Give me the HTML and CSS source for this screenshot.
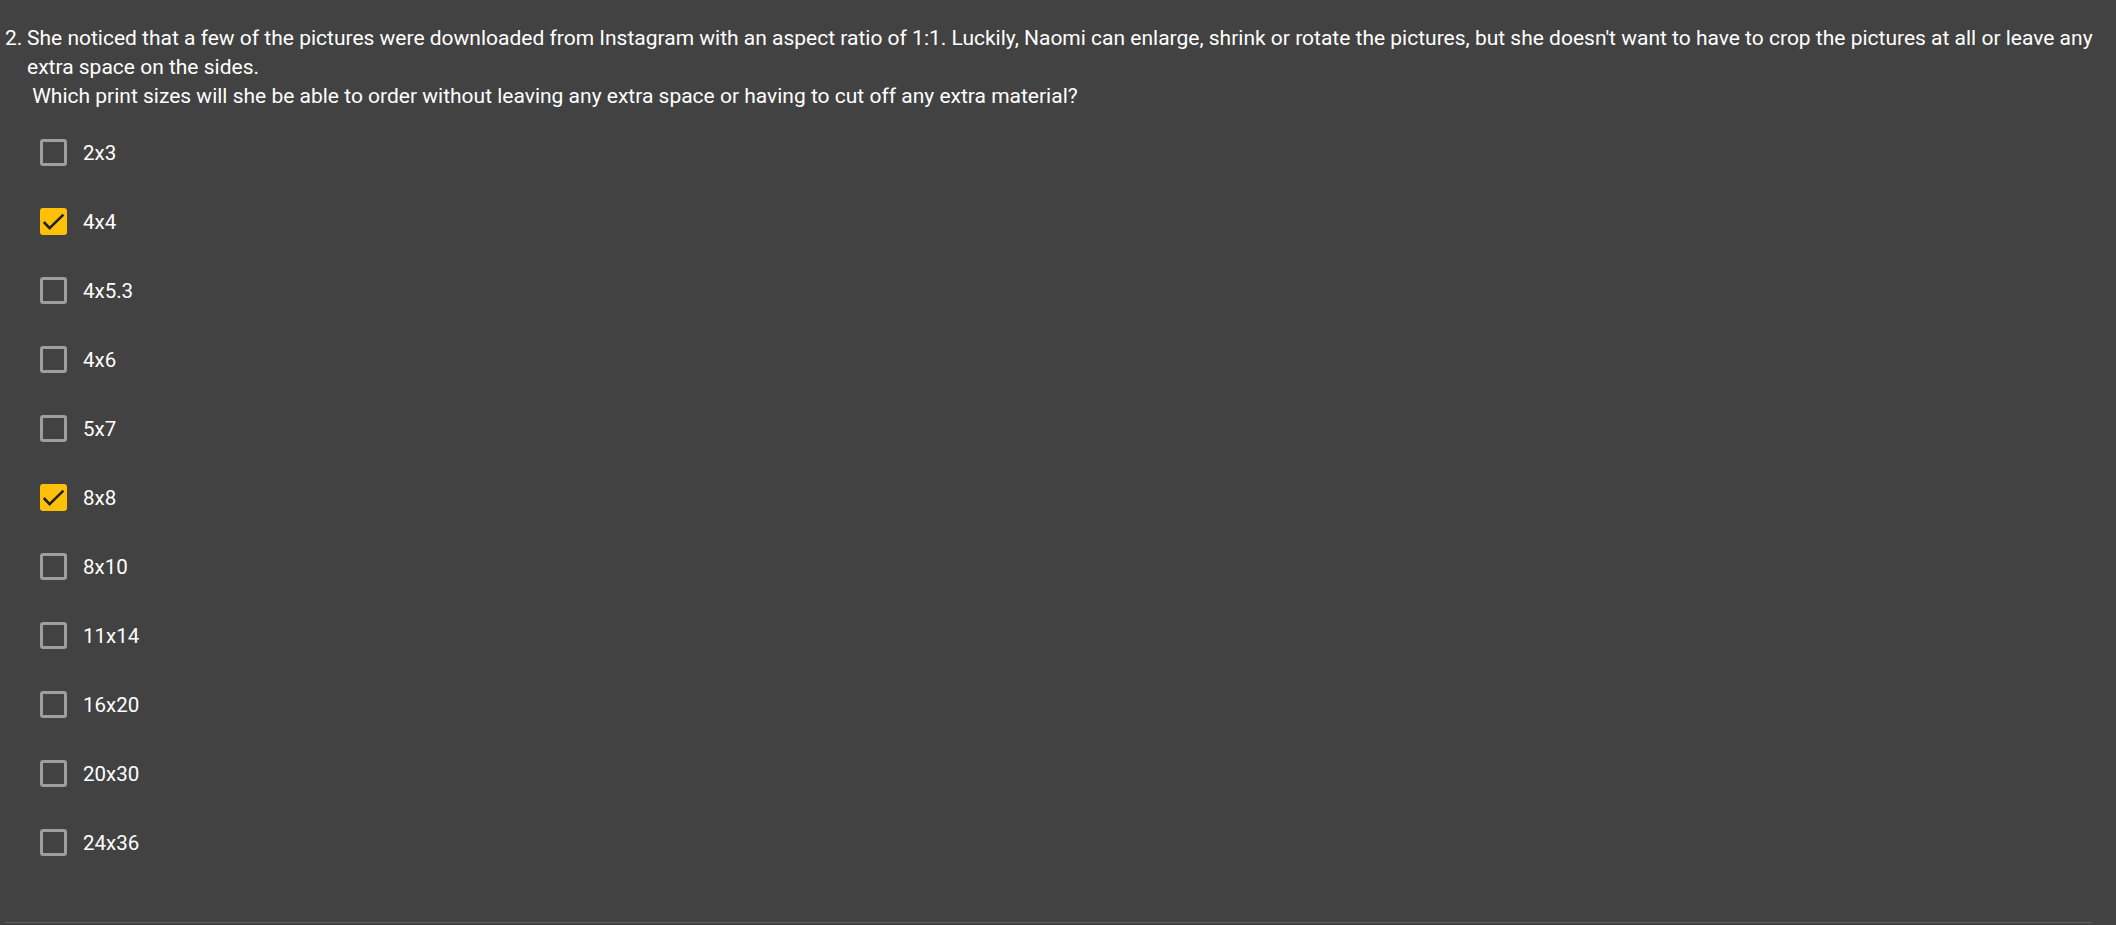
FILE: index.html
```html
<!DOCTYPE html>
<html lang="en">
<head>
    <meta charset="UTF-8">
    <meta name="viewport" content="width=device-width, initial-scale=1.0">
    <title>Question 2</title>
    <link rel="stylesheet" href="styles.css">
</head>
<body>
    <div class="question">
        <div class="question-text">
            <span class="question-number">2.</span>
            <div class="question-body">She noticed that a few of the pictures were downloaded from Instagram with an aspect ratio of 1:1. Luckily, Naomi can enlarge, shrink or rotate the pictures, but she doesn't want to have to crop the pictures at all or leave any extra space on the sides.<br>&nbsp;Which print sizes will she be able to order without leaving any extra space or having to cut off any extra material?</div>
        </div>

        <div class="options">
            <label class="option"><span class="box"></span><span class="label">2x3</span></label>
            <label class="option checked"><span class="box"><svg viewBox="0 0 27 27"><path d="M3.8 14l5.8 6.2 13.8-13.6"/></svg></span><span class="label">4x4</span></label>
            <label class="option"><span class="box"></span><span class="label">4x5.3</span></label>
            <label class="option"><span class="box"></span><span class="label">4x6</span></label>
            <label class="option"><span class="box"></span><span class="label">5x7</span></label>
            <label class="option checked"><span class="box"><svg viewBox="0 0 27 27"><path d="M3.8 14l5.8 6.2 13.8-13.6"/></svg></span><span class="label">8x8</span></label>
            <label class="option"><span class="box"></span><span class="label">8x10</span></label>
            <label class="option"><span class="box"></span><span class="label">11x14</span></label>
            <label class="option"><span class="box"></span><span class="label">16x20</span></label>
            <label class="option"><span class="box"></span><span class="label">20x30</span></label>
            <label class="option"><span class="box"></span><span class="label">24x36</span></label>
        </div>
    </div>
</body>
</html>
```

FILE: styles.css
```css
* {
    margin: 0;
    padding: 0;
    box-sizing: border-box;
}

body {
    font-family: Roboto, 'Noto Sans', sans-serif;
    background: #424242;
    color: #ffffff;
    padding: 0 24px 0 5px;
    height: 925px;
    overflow: hidden;
}

.question {
    padding: 24px 0 45px;
    border-bottom: 1px solid #5e5e5e;
}

.question-text {
    display: flex;
    font-size: 21px;
    line-height: 29px;
    margin-right: -10px;
}

.question-number {
    width: 22px;
    flex-shrink: 0;
}

.question-body {
    flex: 1;
}

.options {
    margin-top: 7px;
    padding-left: 35px;
}

.option {
    display: flex;
    align-items: center;
    height: 69px;
    font-size: 20.5px;
    cursor: pointer;
}

.box {
    position: relative;
    width: 27px;
    height: 27px;
    border: 3px solid #9e9e9e;
    border-radius: 3px;
    margin-right: 16px;
    flex-shrink: 0;
}

.option.checked .box {
    background: #ffc107;
    border-color: #ffc107;
}

/* check mark drawn over the whole box, including its border */
.box svg {
    position: absolute;
    left: -3px;
    top: -3px;
    width: 27px;
    height: 27px;
    fill: none;
    stroke: #212121;
    stroke-width: 2.6;
}
```
